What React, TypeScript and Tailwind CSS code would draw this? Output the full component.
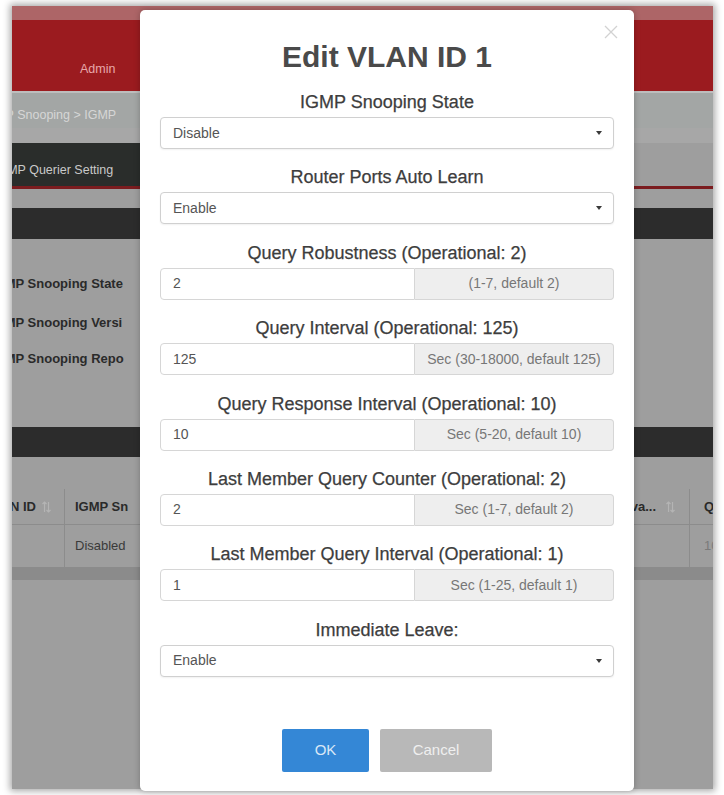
type Field = {
  label: string;
  value: string;
  hint?: string;
};

const fields: Field[] = [
  { label: 'IGMP Snooping State', value: 'Disable' },
  { label: 'Router Ports Auto Learn', value: 'Enable' },
  { label: 'Query Robustness (Operational: 2)', value: '2', hint: '(1-7, default 2)' },
  { label: 'Query Interval (Operational: 125)', value: '125', hint: 'Sec (30-18000, default 125)' },
  { label: 'Query Response Interval (Operational: 10)', value: '10', hint: 'Sec (5-20, default 10)' },
  { label: 'Last Member Query Counter (Operational: 2)', value: '2', hint: 'Sec (1-7, default 2)' },
  { label: 'Last Member Query Interval (Operational: 1)', value: '1', hint: 'Sec (1-25, default 1)' },
  { label: 'Immediate Leave:', value: 'Enable' },
];

function SortIcon() {
  return (
    <svg width="9" height="12" viewBox="0 0 9 12" className="shrink-0">
      <path d="M2.5 1v10M0.5 3l2-2 2 2" stroke="#b4b4b4" strokeWidth="1.2" fill="none" />
      <path d="M6.5 1v10M4.5 9l2 2 2-2" stroke="#b4b4b4" strokeWidth="1.2" fill="none" />
    </svg>
  );
}

function Caret() {
  return <span className="h-0 w-0 border-x-[3px] border-t-[4px] border-x-transparent border-t-[#3a3a3a]" />;
}

function FieldRow({ field }: { field: Field }) {
  return (
    <div className="mb-[17.4px] flex flex-col">
      <label className="mb-[4px] text-center text-[18px] leading-[22px] text-[#3d3d3d] [-webkit-text-stroke:0.25px_#3d3d3d]">
        {field.label}
      </label>
      {field.hint ? (
        <div className="flex h-[32px] text-[14px]">
          <div className="flex flex-1 items-center rounded-l-[4px] border border-[#d6d6d6] bg-white pl-[12px] text-[#555]">
            {field.value}
          </div>
          <div className="flex w-[199px] items-center justify-center rounded-r-[4px] border border-l-0 border-[#d6d6d6] bg-[#eeeeee] text-[#777]">
            {field.hint}
          </div>
        </div>
      ) : (
        <div className="flex h-[32px] items-center justify-between rounded-[4px] border border-[#d0d0d0] bg-white pl-[12px] pr-[11px] text-[14px] text-[#555] shadow-[0_1px_2px_rgba(0,0,0,0.06)]">
          <span>{field.value}</span>
          <Caret />
        </div>
      )}
    </div>
  );
}

// the page behind the dialog, dimmed by the backdrop
function BackdropPage() {
  return (
    <div className="relative flex h-full w-full flex-col overflow-hidden bg-[#9e9e9e] shadow-[0_0_7px_2px_rgba(0,0,0,0.35)]">
      {/* header */}
      <div className="h-[14px] shrink-0 bg-[#ad6567]" />
      <div className="h-[71px] shrink-0 bg-[#9b1b1f] pl-[68px] pt-[40px] text-[12.5px] text-[#e8a8aa]">Admin</div>
      <div className="h-[2px] shrink-0 bg-[#bdbdbd]" />

      {/* breadcrumb */}
      <div className="flex h-[35px] w-[128px] shrink-0 items-center overflow-hidden bg-[#a3a6a5] pt-[9px]">
        <span className="ml-[-30px] whitespace-nowrap text-[12.5px] text-[#d6d6d6]">IGMP Snooping &gt; IGMP</span>
      </div>
      <div className="-mt-[35px] ml-[128px] h-[35px] shrink-0 bg-[#a3a6a5]" />
      <div className="h-[15px] shrink-0 bg-[#a7a7a7]" />

      {/* tabs */}
      <div className="flex h-[43px] shrink-0 bg-[#9e9e9e]">
        <div className="flex w-[128px] items-center overflow-hidden bg-[#2a2d2b] pt-[11px]">
          <span className="ml-[-18px] whitespace-nowrap text-[12.5px] text-[#c9c9c9]">IGMP Querier Setting</span>
        </div>
      </div>
      <div className="h-[3px] shrink-0 bg-[#7b1c1f]" />
      <div className="h-[19px] shrink-0" />
      <div className="h-[31px] shrink-0 bg-[#2c2c2c]" />

      {/* settings */}
      <div className="flex h-[188px] w-[128px] shrink-0 flex-col overflow-hidden pt-[35px] text-[13px] font-bold text-[#2a2a2a]">
        <div className="ml-[-21px] h-[18px] whitespace-nowrap">IGMP Snooping State</div>
        <div className="ml-[-21px] mt-[21px] h-[18px] whitespace-nowrap">IGMP Snooping Versi</div>
        <div className="ml-[-21px] mt-[18px] h-[18px] whitespace-nowrap">IGMP Snooping Repo</div>
      </div>
      <div className="h-[30px] shrink-0 bg-[#2c2c2c]" />
      <div className="h-[32px] shrink-0" />

      {/* table */}
      <div className="flex h-[36px] shrink-0 border-b border-[#8c8c8c] text-[13px] font-bold text-[#2a2a2a]">
        <div className="flex w-[53px] items-center overflow-hidden border-r border-[#8c8c8c] pr-[13px]">
          <span className="ml-[-28px] shrink-0 whitespace-nowrap">VLAN ID</span>
          <span className="ml-auto">
            <SortIcon />
          </span>
        </div>
        <div className="flex w-[75px] items-center overflow-hidden pl-[10px]">
          <span className="whitespace-nowrap">IGMP Sn</span>
        </div>
        <div className="flex-1" />
        <div className="flex w-[100px] items-center justify-end gap-[10px] border-r border-[#8c8c8c] pr-[14px]">
          <span className="whitespace-nowrap">va...</span>
          <SortIcon />
        </div>
        <div className="flex w-[23px] items-center overflow-hidden pl-[14px]">
          <span className="whitespace-nowrap">Q</span>
        </div>
      </div>
      <div className="flex h-[42px] shrink-0 text-[13px] text-[#3a3a3a]">
        <div className="w-[53px] border-r border-[#8c8c8c]" />
        <div className="flex flex-1 items-center pl-[10px]">Disabled</div>
        <div className="w-[100px] border-r border-[#8c8c8c]" />
        <div className="flex w-[23px] items-center overflow-hidden pl-[14px] text-[#7a7a7a]">10</div>
      </div>
      <div className="h-[13px] shrink-0 bg-[#8b8b8b]" />
      <div className="flex-1" />
    </div>
  );
}

export default function App() {
  return (
    <div className="relative h-[795px] w-[724px] overflow-hidden bg-white pb-[6px] pl-[12px] pr-[11px] pt-[6px] font-['Liberation_Sans',Arial,sans-serif]">
      <BackdropPage />

      {/* Edit dialog */}
      <div className="absolute left-[140px] top-[10px] flex h-[781px] w-[494px] flex-col rounded-[5px] bg-white px-[20px] pt-[29px] shadow-[0_0_6px_rgba(0,0,0,0.25)]">
        <button className="absolute right-[16px] top-[15px] text-[#d2d2d2]">
          <svg width="14" height="14" viewBox="0 0 14 14">
            <path d="M1 1l12 12M13 1L1 13" stroke="currentColor" strokeWidth="1.3" />
          </svg>
        </button>
        <h1 className="text-center text-[30px] font-bold leading-[36px] text-[#4a4a4a]">Edit VLAN ID 1</h1>
        <div className="mt-[16px] flex flex-col">
          {fields.map((f) => (
            <FieldRow key={f.label} field={f} />
          ))}
        </div>
        <div className="mt-[34.6px] flex justify-center gap-[11px]">
          <button className="h-[43px] w-[87px] rounded-[2px] bg-[#3487d6] text-[15px] text-[#d9e8f7]">OK</button>
          <button className="h-[43px] w-[112px] rounded-[2px] bg-[#b8b8b8] text-[15px] text-[#efefef]">Cancel</button>
        </div>
      </div>
    </div>
  );
}
